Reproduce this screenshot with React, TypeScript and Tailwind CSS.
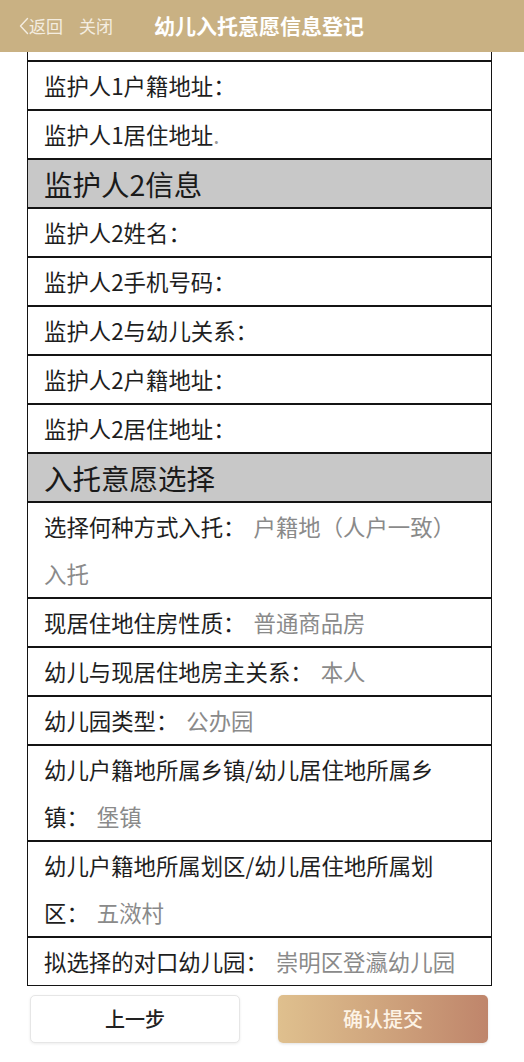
import React from "react";

const FONT = "font-['Noto_Sans_CJK_SC','Noto_Sans',sans-serif]";

function Row({ children }: { children: React.ReactNode }) {
  return (
    <div className="border border-[#141414] pl-4 pr-2 text-[22.4px] leading-[47px] text-[#1e1e1e] whitespace-nowrap">
      {children}
    </div>
  );
}

function Section({ children }: { children: React.ReactNode }) {
  return (
    <div className="border border-[#141414] bg-[#c8c8c8] pl-4 text-[28.5px] leading-[47px] text-[#1a1a1a]">
      {children}
    </div>
  );
}

function Val({ children }: { children: React.ReactNode }) {
  return <span className="ml-2 text-[#8a8a8a]">{children}</span>;
}

export default function App() {
  return (
    <div className={`${FONT} w-[524px] h-[1062px] overflow-hidden bg-white flex flex-col`}>
      <header className="h-[52px] shrink-0 bg-[#c9b183] flex items-center">
        <div className="flex items-center ml-[19px] text-[17px] text-[#f4ede0]">
          <svg width="10" height="18" viewBox="0 0 10 18" className="mr-[0px]">
            <path d="M8.5 1.5 L1.5 9 L8.5 16.5" fill="none" stroke="#f4ede0" strokeWidth="1.4" strokeLinecap="round" strokeLinejoin="round" />
          </svg>
          <span>返回</span>
          <span className="ml-[16px]">关闭</span>
        </div>
        <div className="ml-[41px] text-[21px] font-bold text-white">幼儿入托意愿信息登记</div>
      </header>

      <div className="ml-[27px] w-[465px] flex flex-col">
        <div className="h-[9px] border-x border-b border-[#141414]" />
        <Row>监护人1户籍地址：</Row>
        <Row>
          监护人1居住地址<span className="text-[#9a9a9a]">.</span>
        </Row>
        <Section>监护人2信息</Section>
        <Row>监护人2姓名：</Row>
        <Row>监护人2手机号码：</Row>
        <Row>监护人2与幼儿关系：</Row>
        <Row>监护人2户籍地址：</Row>
        <Row>监护人2居住地址：</Row>
        <Section>入托意愿选择</Section>
        <Row>
          选择何种方式入托：<Val>户籍地（人户一致）</Val>
          <br />
          <span className="text-[#8a8a8a]">入托</span>
        </Row>
        <Row>
          现居住地住房性质：<Val>普通商品房</Val>
        </Row>
        <Row>
          幼儿与现居住地房主关系：<Val>本人</Val>
        </Row>
        <Row>
          幼儿园类型：<Val>公办园</Val>
        </Row>
        <Row>
          幼儿户籍地所属乡镇/幼儿居住地所属乡
          <br />
          镇：<Val>堡镇</Val>
        </Row>
        <Row>
          幼儿户籍地所属划区/幼儿居住地所属划
          <br />
          区：<Val>五滧村</Val>
        </Row>
        <Row>
          拟选择的对口幼儿园：<Val>崇明区登瀛幼儿园</Val>
        </Row>
      </div>

      <div className="mt-[9px] ml-[30px] flex gap-[38px]">
        <button className="w-[210px] h-[48px] rounded-[5px] border border-[#e6e6e6] bg-white shadow-[0_1px_3px_rgba(0,0,0,0.08)] text-[20px] font-medium text-[#222]">
          上一步
        </button>
        <button className="w-[210px] h-[48px] rounded-[5px] bg-gradient-to-r from-[#dfc08e] via-[#cfa47d] to-[#bf856b] shadow-[0_1px_3px_rgba(0,0,0,0.12)] text-[20px] font-medium text-[#fdf3e6]">
          确认提交
        </button>
      </div>
    </div>
  );
}
